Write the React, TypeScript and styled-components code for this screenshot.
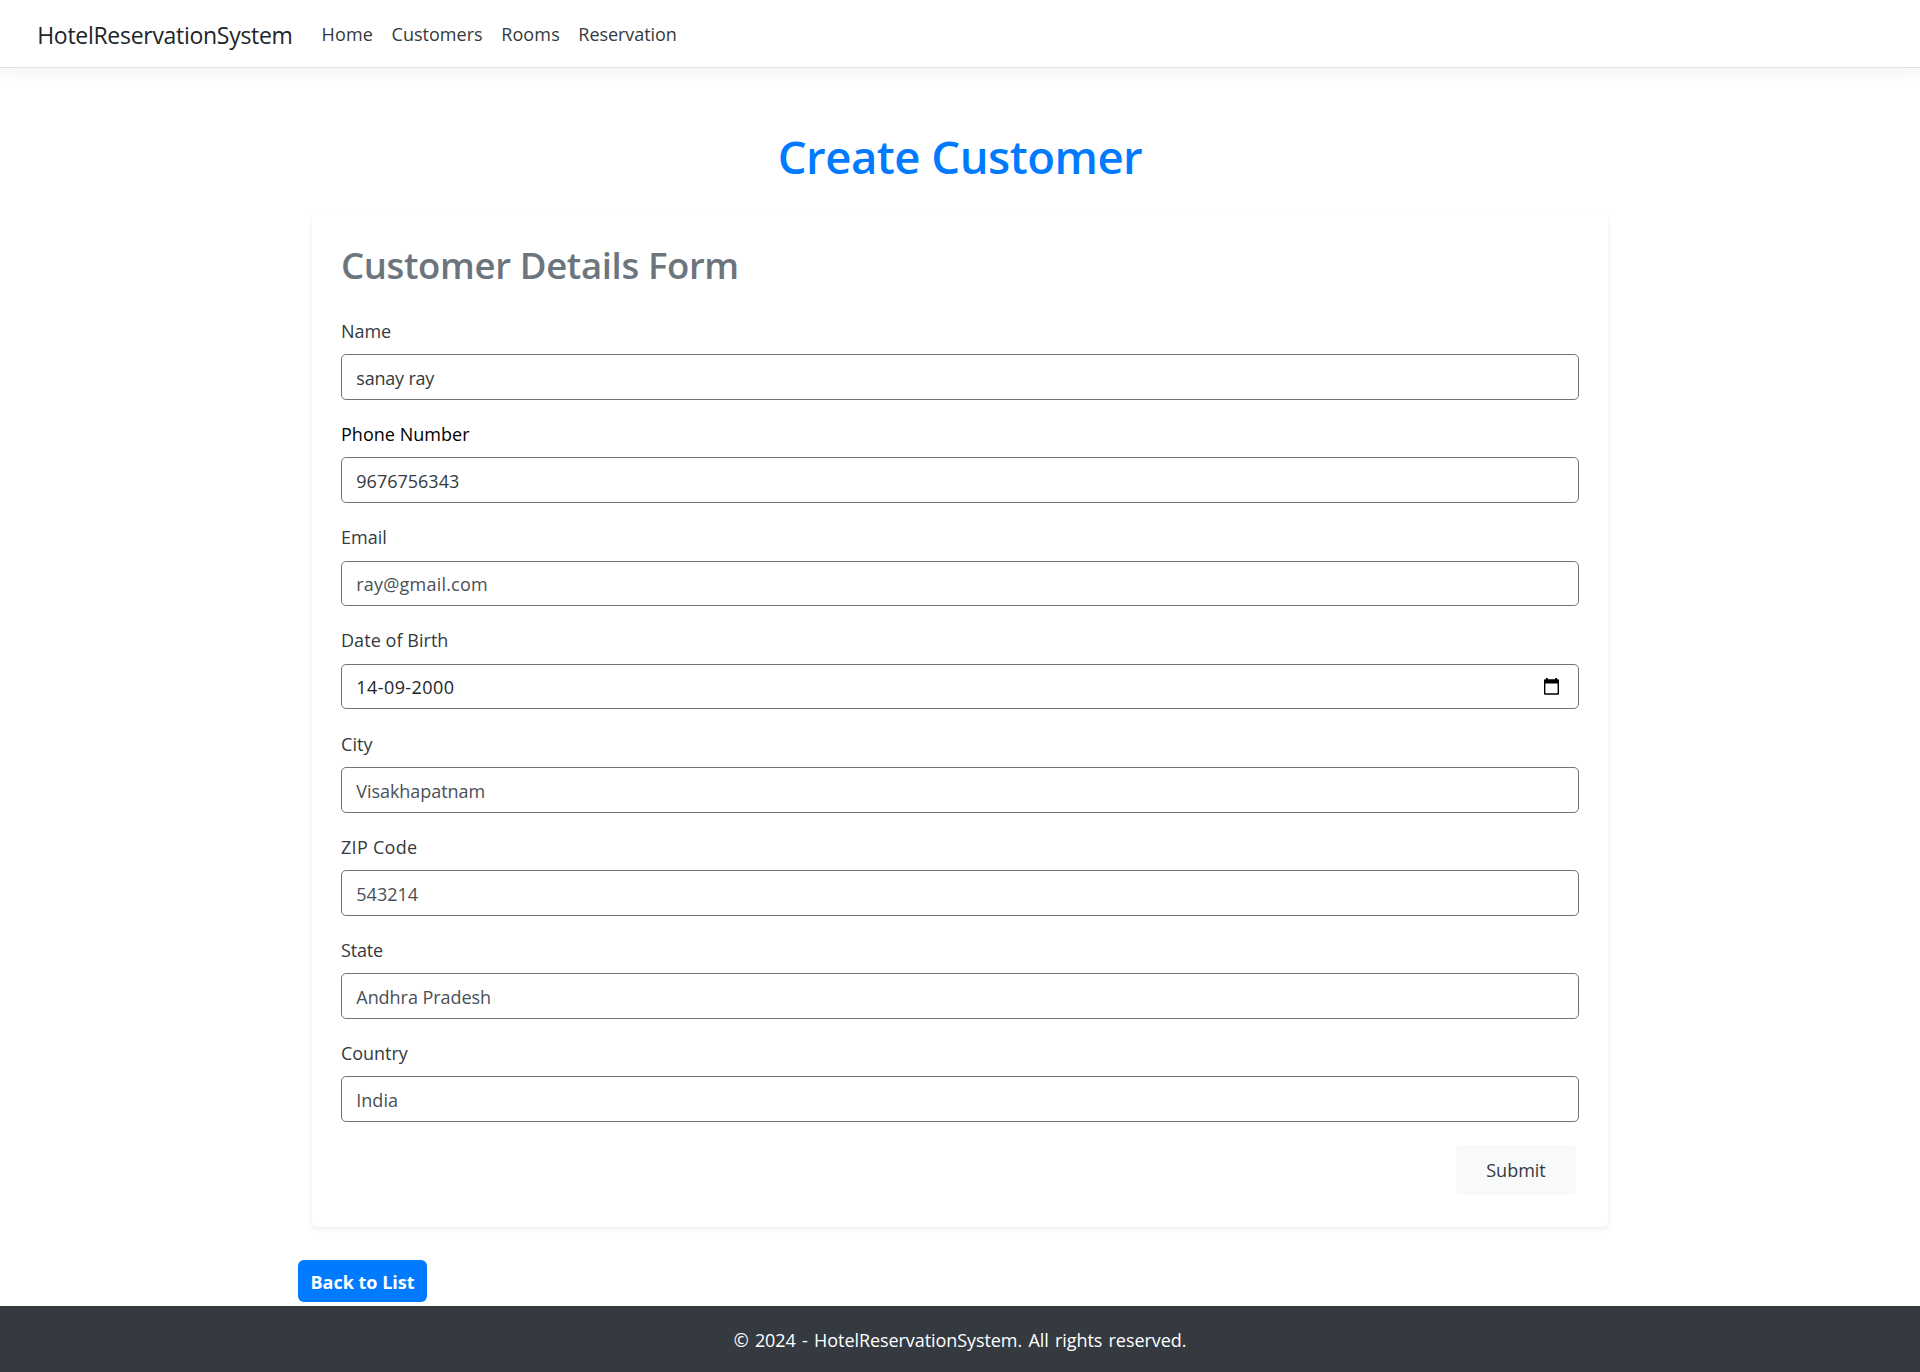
import React from "react";
import styled, { createGlobalStyle } from "styled-components";

const GlobalStyle = createGlobalStyle`
  *, *::before, *::after { box-sizing: border-box; }
  body {
    margin: 0;
    background: #fff;
    color: #212529;
    font-family: "Open Sans", "Noto Sans", sans-serif;
    font-size: 18px;
  }
`;

const Page = styled.div`
  display: flex;
  flex-direction: column;
  min-height: 1372px;
`;

const Header = styled.header`
  display: flex;
  align-items: center;
  height: 68px;
  padding-left: 37.2px;
  border-bottom: 1px solid #dee2e6;
  box-shadow: 0 5px 15px rgba(0, 0, 0, 0.05);
`;

const Brand = styled.a`
  width: 284.4px;
  padding-top: 2px;
  color: #212529;
  font-size: 23px;
  line-height: 32px;
  letter-spacing: -0.29px;
  text-decoration: none;
`;

const Nav = styled.nav`
  display: flex;
  gap: 18.5px;
`;

const NavLink = styled.a<{ $track: number }>`
  color: #343a40;
  line-height: 30px;
  letter-spacing: ${(p) => p.$track}px;
  text-decoration: none;
`;

const Main = styled.main`
  width: 1324px;
  flex: 1;
  margin: 0 auto;
  padding-top: 61px;
`;

const PageTitle = styled.h1`
  margin: 0 0 29px;
  color: #007bff;
  font-size: 45.5px;
  font-weight: 600;
  line-height: 54px;
  letter-spacing: -0.5px;
  text-align: center;
`;

const Card = styled.section`
  margin: 0 14px;
  height: 1015px;
  padding: 31px 29px 32px;
  border-radius: 5px;
  background: #fff;
  box-shadow: 0 2px 5px rgba(0, 0, 0, 0.075);
`;

const CardTitle = styled.h2`
  margin: 0 0 29px;
  color: #6c757d;
  font-size: 36.5px;
  font-weight: 600;
  line-height: 44px;
  letter-spacing: -0.35px;
`;

const Form = styled.form`
  display: flex;
  flex-direction: column;
  gap: 19.14px;
`;

const Field = styled.div`
  display: flex;
  flex-direction: column;
  justify-content: space-between;
  height: 84px;
`;

const Label = styled.label<{ $color: string; $track: number }>`
  color: ${(p) => p.$color};
  line-height: 30px;
  letter-spacing: ${(p) => p.$track}px;
`;

const Control = styled.div<{ $height: number }>`
  display: flex;
  align-items: center;
  height: ${(p) => p.$height}px;
  padding: 0 18px 0 14.3px;
  border: 1px solid #6c757d;
  border-radius: 5px;
  background: #fff;
`;

const Input = styled.input<{ $color: string; $track: number; $top: number }>`
  flex: 1;
  min-width: 0;
  height: 100%;
  padding: ${(p) => p.$top}px 0 0;
  border: 0;
  outline: 0;
  background: transparent;
  color: ${(p) => p.$color};
  font: inherit;
  letter-spacing: ${(p) => p.$track}px;
`;

const Actions = styled.div`
  display: flex;
  justify-content: flex-end;
  padding: 4px 3px 0 0;
`;

const SubmitButton = styled.button`
  width: 120px;
  height: 50px;
  padding: 0;
  border: 0;
  border-radius: 5px;
  background: #f8f9fa;
  color: #343a40;
  font: inherit;
`;

const BackLink = styled.a`
  display: block;
  width: 129px;
  height: 42px;
  margin-top: 33px;
  padding-top: 1px;
  border-radius: 6px;
  background: #007bff;
  color: #fff;
  font-weight: 700;
  line-height: 42px;
  text-align: center;
  text-decoration: none;
`;

const Footer = styled.footer`
  height: 66px;
  padding-top: 1px;
  background: #343a40;
  color: #fff;
  line-height: 66px;
  letter-spacing: -0.07px;
  word-spacing: 1.7px;
  text-align: center;
`;

const CalendarIcon = () => (
  <svg width="16" height="18" viewBox="0 0 16 18" aria-hidden="true">
    <path
      fill="#000"
      fillRule="evenodd"
      d="M2 0h1.8v1.3h7.4v-1.3h1.8v1.3h1a1 1 0 0 1 1 1v13.4a1 1 0 0 1-1 1h-13a1 1 0 0 1-1-1v-13.4a1 1 0 0 1 1-1h1zM1.4 5.4v9.8h12.2v-9.8z"
    />
  </svg>
);

const links = [
  { text: "Home", track: 0.145 },
  { text: "Customers", track: 0.022 },
  { text: "Rooms", track: 0.14 },
  { text: "Reservation", track: -0.054 },
];

const fields = [
  { id: "name", label: "Name", value: "sanay ray", labelTrack: -0.07, track: -0.2, color: "#343a40" },
  { id: "phone", label: "Phone Number", value: "9676756343", labelTrack: 0.03, track: 0, labelColor: "#000", color: "#343a40" },
  { id: "email", label: "Email", value: "ray@gmail.com", labelTrack: 0, track: 0.2, color: "#495057", height: 45, top: 0 },
  { id: "dob", label: "Date of Birth", value: "14-09-2000", labelTrack: 0.05, track: 0.42, color: "#212529", date: true, height: 45, top: 0 },
  { id: "city", label: "City", value: "Visakhapatnam", labelTrack: 0.067, track: -0.05, color: "#495057" },
  { id: "zip", label: "ZIP Code", value: "543214", labelTrack: 0.284, track: 0, color: "#495057" },
  { id: "state", label: "State", value: "Andhra Pradesh", labelTrack: -0.2, track: -0.05, color: "#495057" },
  { id: "country", label: "Country", value: "India", labelTrack: -0.05, track: 0, color: "#495057" },
];

export default function App() {
  return (
    <Page>
      <GlobalStyle />
      <Header>
        <Brand>HotelReservationSystem</Brand>
        <Nav>
          {links.map((l) => (
            <NavLink key={l.text} $track={l.track}>{l.text}</NavLink>
          ))}
        </Nav>
      </Header>
      <Main>
        <PageTitle>Create Customer</PageTitle>
        <Card>
          <CardTitle>Customer Details Form</CardTitle>
          <Form onSubmit={(e) => e.preventDefault()}>
            {fields.map((f) => (
              <Field key={f.id}>
                <Label htmlFor={f.id} $color={f.labelColor ?? "#343a40"} $track={f.labelTrack}>
                  {f.label}
                </Label>
                <Control $height={f.height ?? 46}>
                  <Input id={f.id} defaultValue={f.value} $color={f.color} $track={f.track} $top={f.top ?? 2} />
                  {f.date && <CalendarIcon />}
                </Control>
              </Field>
            ))}
            <Actions>
              <SubmitButton type="submit">Submit</SubmitButton>
            </Actions>
          </Form>
        </Card>
        <BackLink>Back to List</BackLink>
      </Main>
      <Footer>© 2024 - HotelReservationSystem. All rights reserved.</Footer>
    </Page>
  );
}
